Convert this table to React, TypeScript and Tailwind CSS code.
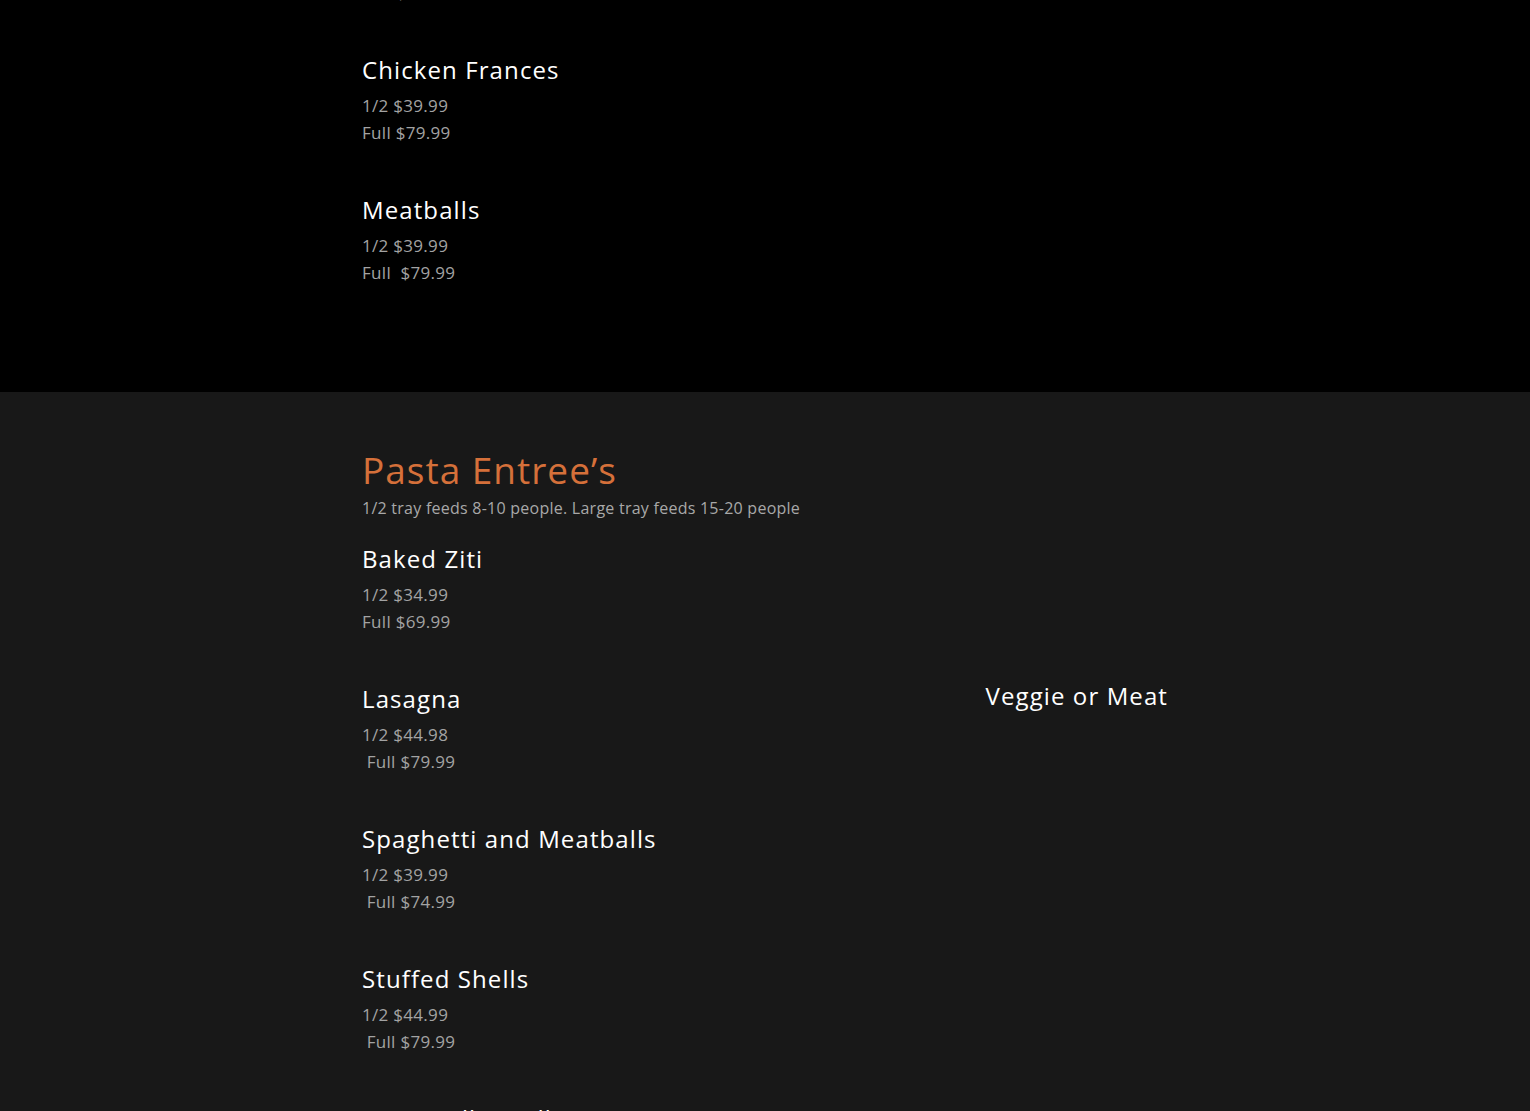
import React from "react";

type Item = { name: string; lines: string[] };

const topItems: Item[] = [
  { name: "Sausage and Peppers", lines: ["1/2 $39.99", "Full $69.99"] },
  { name: "Chicken Frances", lines: ["1/2 $39.99", "Full $79.99"] },
  { name: "Meatballs", lines: ["1/2 $39.99", "Full\u00a0 $79.99"] },
];

const pastaItems: Item[] = [
  { name: "Baked Ziti", lines: ["1/2 $34.99", "Full $69.99"] },
  { name: "Lasagna", lines: ["1/2 $44.98", "\u00a0Full $79.99"] },
  { name: "Spaghetti and Meatballs", lines: ["1/2 $39.99", "\u00a0Full $74.99"] },
  { name: "Stuffed Shells", lines: ["1/2 $44.99", "\u00a0Full $79.99"] },
  { name: "Penne Alla Vodka", lines: ["1/2 $39.99", "Full $74.99"] },
];

function MenuItem({ item }: { item: Item }) {
  return (
    <div className="mb-[48px]">
      <div className="text-[24px] leading-[32px] text-white mb-[6px] tracking-[1.1px]">{item.name}</div>
      {item.lines.map((l, i) => (
        <div key={i} className="text-[17px] leading-[27px] text-[#a3a3a3] whitespace-pre tracking-[0.3px]">
          {l}
        </div>
      ))}
    </div>
  );
}

export default function App() {
  return (
    <div
      className="w-full h-[1111px] overflow-hidden bg-[#181818]"
      style={{ fontFamily: "'Open Sans', 'Noto Sans', sans-serif" }}
    >
      <section className="bg-black h-[392px] overflow-hidden">
        <div className="w-[806px] mx-auto -mt-[86px]">
          {topItems.map((it) => (
            <MenuItem key={it.name} item={it} />
          ))}
        </div>
      </section>
      <section className="bg-[#181818] pt-[56px]">
        <div className="w-[806px] mx-auto">
          <h2 className="text-[37px] leading-[44px] text-[#d5703a] mb-[4px] tracking-[1px]">Pasta Entree’s</h2>
          <div className="text-[16px] leading-[24px] text-[#a8a8a8] mb-[23px] tracking-[0.25px]">
            1/2 tray feeds 8-10 people. Large tray feeds 15-20 people
          </div>
          <div className="flex justify-between">
            <div>
              {pastaItems.map((it) => (
                <MenuItem key={it.name} item={it} />
              ))}
            </div>
            <div className="pt-[137px] text-[24px] leading-[32px] text-white text-right tracking-[1.1px]">
              Veggie or Meat
            </div>
          </div>
        </div>
      </section>
    </div>
  );
}
